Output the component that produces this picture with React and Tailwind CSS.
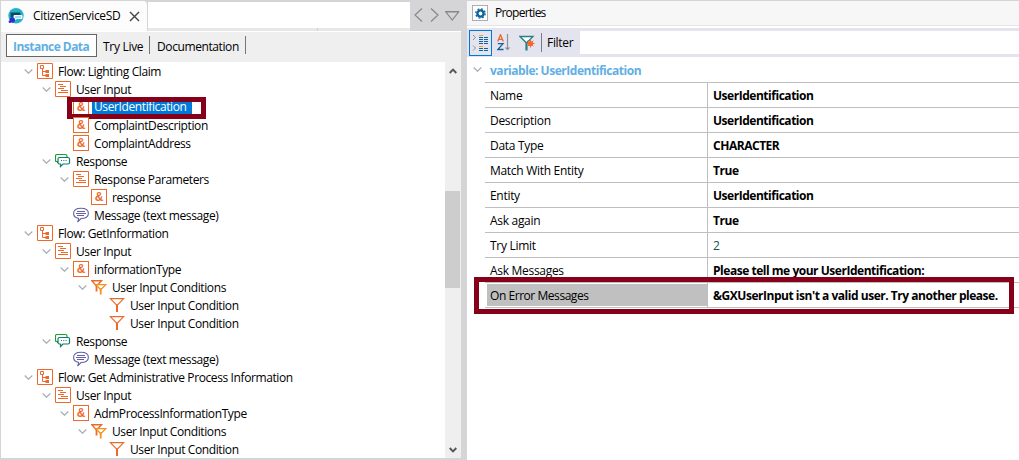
import React from "react";

const ORANGE = "#ec6a2c";

function Chevron() {
  return (
    <svg className="h-[5px] w-[9px]" viewBox="0 0 9 5" fill="none">
      <path d="M0.7 0.5 L4.5 4.2 L8.3 0.5" stroke="#a9b0b4" strokeWidth="1.3" />
    </svg>
  );
}

function FlowIcon() {
  return (
    <svg className="size-4" viewBox="0 0 16 16" fill="none" stroke={ORANGE}>
      <path d="M0.5 0.5h15v15h-15z" fill="#fff" />
      <path d="M3.5 2.5h3v3h-3zM5.5 5.5v7H9M5.5 8.5H9" />
      <path d="M8.500 7h3.500v3H8.500zM8.500 11h3.500v3H8.500z" fill={ORANGE} stroke="none" />
    </svg>
  );
}

function InputIcon() {
  return (
    <svg className="size-4" viewBox="0 0 16 16" fill="none" stroke={ORANGE}>
      <path d="M0.5 0.5h15v15h-15z" fill="#fff" />
      <path d="M3 3.5h5M5 5.5h6M3 7.5h6M6 9.5h7M3 11.5h10" />
    </svg>
  );
}

function VarIcon() {
  return (
    <span className="flex size-4 items-center justify-center border border-[#ec6a2c] bg-white font-['Liberation_Sans'] text-[12px] leading-none font-bold tracking-normal text-[#ec6a2c]">
      &amp;
    </span>
  );
}

function ResponseIcon() {
  return (
    <svg className="size-4" viewBox="0 0 16 16" fill="none">
      <path d="M2.5 10V8.5H1.5Q0.5 8.5 0.5 7.500V3Q0.500 1.500 2 1.500H10.500Q12 1.500 12 3V4" stroke="#19a02c" strokeWidth="1.200" />
      <path d="M4.500 4.500H13Q14.500 4.500 14.500 6V9.500Q14.500 11 13 11H8L5.500 13.500V11H4.500Q3 11 3 9.500V6Q3 4.500 4.500 4.500Z" fill="#fff" stroke="#157a6e" strokeWidth="1.200" />
      <path d="M6 7h1v1H6zM8.300 7h1v1h-1zM10.600 7h1v1h-1z" fill="#157a6e" />
    </svg>
  );
}

function MessageIcon() {
  return (
    <svg className="size-4" viewBox="0 0 16 16" fill="none" stroke="#6460a5">
      <path d="M5.500 11.300C2.500 10.800 0.600 9 0.600 6.500C0.600 3.300 3.500 1.300 8 1.300S15.400 3.300 15.400 6.500S12.500 11.500 8 11.500L4.500 15Q5.800 13 5.500 11.300Z" strokeWidth="1.100" />
      <path d="M4 4.500h8M3 6.500h10M4 8.500h7" />
    </svg>
  );
}

function FunnelIcon() {
  return (
    <svg className="size-4" viewBox="0 0 16 16" fill="none">
      <path d="M1.300 1.600H14.700L8.500 8H7.500Z" stroke={ORANGE} strokeWidth="1.200" />
      <path d="M8 7.500V15" stroke={ORANGE} strokeWidth="2" />
    </svg>
  );
}

function FunnelsIcon() {
  return (
    <svg className="size-4" viewBox="0 0 16 16" fill="none">
      <path d="M0.800 1.700H10.500L6 6.500H5Z" stroke={ORANGE} strokeWidth="1.400" />
      <path d="M5.500 6V12.500" stroke={ORANGE} strokeWidth="1.800" />
      <path d="M5 5.700H14.700L10 10.500H9.500Z" fill="#fff" stroke="#f0941f" strokeWidth="1.300" />
      <path d="M9.700 9.500V15.500" stroke="#f0941f" strokeWidth="1.800" />
    </svg>
  );
}

const ICONS = {
  flow: FlowIcon,
  input: InputIcon,
  variable: VarIcon,
  response: ResponseIcon,
  message: MessageIcon,
  funnel: FunnelIcon,
  funnels: FunnelsIcon,
};

const INDENTS = ["pl-[22px]", "pl-[40px]", "pl-[58px]", "pl-[76px]", "pl-[94px]"];

const TREE = [
  { level: 0, icon: "flow", label: "Flow: Lighting Claim", open: true },
  { level: 1, icon: "input", label: "User Input", open: true },
  { level: 2, icon: "variable", label: "UserIdentification", selected: true },
  { level: 2, icon: "variable", label: "ComplaintDescription" },
  { level: 2, icon: "variable", label: "ComplaintAddress" },
  { level: 1, icon: "response", label: "Response", open: true },
  { level: 2, icon: "input", label: "Response Parameters", open: true },
  { level: 3, icon: "variable", label: "response" },
  { level: 2, icon: "message", label: "Message (text message)" },
  { level: 0, icon: "flow", label: "Flow: GetInformation", open: true },
  { level: 1, icon: "input", label: "User Input", open: true },
  { level: 2, icon: "variable", label: "informationType", open: true },
  { level: 3, icon: "funnels", label: "User Input Conditions", open: true },
  { level: 4, icon: "funnel", label: "User Input Condition" },
  { level: 4, icon: "funnel", label: "User Input Condition" },
  { level: 1, icon: "response", label: "Response", open: true },
  { level: 2, icon: "message", label: "Message (text message)" },
  { level: 0, icon: "flow", label: "Flow: Get Administrative Process Information", open: true },
  { level: 1, icon: "input", label: "User Input", open: true },
  { level: 2, icon: "variable", label: "AdmProcessInformationType", open: true },
  { level: 3, icon: "funnels", label: "User Input Conditions", open: true },
  { level: 4, icon: "funnel", label: "User Input Condition" },
];

function TreeRow({ level, icon, label, open, selected }) {
  const Icon = ICONS[icon];
  return (
    <div className={`relative flex h-[18px] items-center ${INDENTS[level]}`}>
      <span className="flex w-[14px] shrink-0 items-center pl-px">{open && <Chevron />}</span>
      <span className="shrink-0"><Icon /></span>
      <span
        className={
          selected
            ? "ml-[3px] h-[18px] w-[100px] bg-[#0078d7] pl-[2px] leading-[18px] whitespace-nowrap text-white"
            : "ml-[5px] leading-[17px] whitespace-nowrap"
        }
      >
        {label}
      </span>
      {selected && (
        <span className="absolute -top-px left-[66px] h-[22px] w-[139px] border-5 border-[#850018]" />
      )}
    </div>
  );
}

function AppLogo() {
  return (
    <svg className="size-4" viewBox="0 0 16 16">
      <circle cx="8" cy="7.700" r="7.700" fill="#27b0cc" />
      <path d="M2.500 4.500h9q1 0 1 1v2H7v2H3.500q-1 0-1-1z" fill="#0c4a5e" />
      <path d="M6.500 7h7q1 0 1 1v2q0 1-1 1H9l-2.500 1.500V11h-1V8q0-1 1-1z" fill="#eefcff" />
      <path d="M7 9h6" stroke="#27b0cc" strokeWidth="0.800" />
      <circle cx="4.300" cy="12" r="2.700" fill="#2d2fd0" />
      <circle cx="1.900" cy="13.700" r="1.300" fill="#2d2fd0" />
    </svg>
  );
}

function TabBar() {
  return (
    <div className="flex h-[30px] bg-[#d5d5d7]">
      <div className="flex w-[146px] items-center rounded-tr-sm bg-[#fcfcfc] pl-[7px]">
        <AppLogo />
        <span className="ml-[9px] w-[88px] tracking-[-0.33px] whitespace-nowrap">CitizenServiceSD</span>
        <svg className="ml-[8px] size-[11px]" viewBox="0 0 11 11" stroke="#444" strokeWidth="1.400">
          <path d="M1 1l9 9M10 1l-9 9" />
        </svg>
      </div>
      <div className="flex w-[263px] flex-col border-l border-[#d5d5d7] pt-px">
        <div className="h-[26px] bg-white" />
        <div className="flex flex-1 bg-[#e7e7e7] pl-[169px]">
          <div className="w-px bg-[#cfcfd1]" />
        </div>
      </div>
      <svg className="mt-[7px] ml-[3px] h-[15px] w-[48px]" viewBox="0 0 48 15" fill="none" stroke="#85888b" strokeWidth="1.200">
        <path d="M9 0.500L2 7L9 13.500M18 0.500L25 7L18 13.500M32 3.500H46M33 4H45.500L39.200 12Z" />
      </svg>
    </div>
  );
}

function ViewBar() {
  return (
    <div className="flex h-[31px] border-t border-white bg-[#efefef] pt-[2px] pl-[5px]">
      <div className="h-[23px] w-[91px] border border-[#666] bg-white pl-[6px] leading-[24px] font-bold tracking-[-0.53px] whitespace-nowrap text-[#61afe4]">
        Instance Data
      </div>
      <div className="mt-[2px] ml-[6px] h-[18px] w-[47px] border-r border-[#777] leading-[21px] tracking-[-0.3px] whitespace-nowrap">Try Live</div>
      <div className="mt-[2px] ml-[7px] h-[18px] w-[89px] border-r border-[#777] leading-[21px] tracking-[-0.4px] whitespace-nowrap">Documentation</div>
    </div>
  );
}

function ScrollBar() {
  return (
    <div className="flex w-4 flex-col items-center bg-[#efefef]">
      <svg className="mt-[6px] h-[6px] w-[8px]" viewBox="0 0 8 6" fill="none" stroke="#555" strokeWidth="1.900">
        <path d="M0.700 5L4 1.700L7.300 5" />
      </svg>
      <div className="mt-[117px] mr-px h-[97px] w-[15px] bg-[#cdcdcd]" />
      <svg className="mt-auto mb-[5px] h-[6px] w-[8px]" viewBox="0 0 8 6" fill="none" stroke="#555" strokeWidth="1.900">
        <path d="M0.700 1L4 4.300L7.300 1" />
      </svg>
    </div>
  );
}

function Gear() {
  return (
    <span className="flex size-4 items-center justify-center border border-[#a7b0b7] bg-white">
      <svg className="size-[11px]" viewBox="0 0 11 11" fill="none" stroke="#0b639c">
        <circle cx="5.500" cy="5.500" r="3.100" strokeWidth="2.400" />
        <circle cx="5.500" cy="5.500" r="4.700" strokeWidth="1.300" strokeDasharray="1.850 1.840" />
      </svg>
    </span>
  );
}

function CategoryIcon() {
  return (
    <svg className="h-[18px] w-[19px]" viewBox="0 0 19 18" fill="none">
      <path d="M2 1L4.500 3.500L2 6M2 11.500L4.500 14L2 16.500" stroke="#8c9196" />
      <path d="M8 1.500h4M8 12.500h4" stroke="#f29a3c" />
      <path d="M8 3.500h4M13 3.500h4M8 5.500h4M13 5.500h4M8 7.500h4M13 7.500h4M8 9.500h4M13 9.500h4M8 14.500h4M13 14.500h4M8 16.500h4M13 16.500h4" stroke="#12639a" />
    </svg>
  );
}

function SortIcon() {
  return (
    <svg className="h-[17px] w-[13px]" viewBox="0 0 13 17" fill="none">
      <path d="M0.700 7.500L3.500 0.700L6.300 7.500M1.500 5.300H5.500" stroke="#f1662d" strokeWidth="1.300" />
      <path d="M0.800 9.600H6L0.800 15.500H6.500" stroke="#12639a" strokeWidth="1.300" />
      <path d="M10.500 0V15M8.500 13.500L10.500 15.500L12.500 13.500" stroke="#8b8f93" strokeWidth="1.200" />
    </svg>
  );
}

function FilterIcon() {
  return (
    <svg className="size-4" viewBox="0 0 16 16" fill="none">
      <path d="M1 1.500H14L8 7.500H7Z" fill="#fff" stroke="#267f88" strokeWidth="1.300" />
      <path d="M7.500 7V15.500" stroke="#267f88" strokeWidth="2.200" />
      <circle cx="11.500" cy="8.500" r="2.600" fill="#fb6528" />
      <path d="M11.500 4.500v8M7.500 8.500h8M8.700 5.700l5.600 5.600M14.300 5.700l-5.600 5.600" stroke="#fb6528" />
    </svg>
  );
}

const PROPERTIES = [
  { name: "Name", value: "UserIdentification" },
  { name: "Description", value: "UserIdentification" },
  { name: "Data Type", value: "CHARACTER" },
  { name: "Match With Entity", value: "True" },
  { name: "Entity", value: "UserIdentification" },
  { name: "Ask again", value: "True" },
  { name: "Try Limit", value: "2", plain: true },
  { name: "Ask Messages", value: "Please tell me your UserIdentification:" },
  { name: "On Error Messages", value: "&GXUserInput isn't a valid user. Try another please.", selected: true },
];

function PropertyRow({ name, value, plain, selected }) {
  return (
    <div className="relative flex h-[25px] border-t border-[#bfbfbf]">
      <div className={`w-[223px] border-r border-[#bfbfbf] leading-[26px] tracking-[-0.3px] ${selected ? "py-px pl-[2px]" : "pl-[5px]"}`}>
        {selected ? <div className="h-[22px] bg-[#c0c0c0] pl-[3px] leading-[24px] tracking-[-0.45px]">{name}</div> : name}
      </div>
      <div className={`pl-[5px] leading-[26px] whitespace-nowrap ${plain ? "text-[#164f4a]" : "font-bold tracking-[-0.47px]"}`}>{value}</div>
      {selected && <div className="absolute -top-[6px] -left-[11px] h-[37px] w-[540px] border-5 border-[#850018]" />}
    </div>
  );
}

export default function App() {
  return (
    <div className="flex h-[460px] w-[1019px] overflow-hidden bg-[#d5d5d7] pt-px font-['Open_Sans','Noto_Sans',sans-serif] text-[12px] tracking-[-0.39px] text-black">
      <section className="ml-px flex w-[460px] flex-col">
        <TabBar />
        <ViewBar />
        <div className="flex h-[396px] bg-white">
          <div className="w-[444px]">
            {TREE.map((row, i) => <TreeRow key={i} {...row} />)}
          </div>
          <ScrollBar />
        </div>
      </section>
      <section className="ml-[6px] flex w-[552px] flex-col bg-white">
        <header className="flex h-[25px] items-center border-b border-[#e5e5e5] bg-[#f7f7f7] pl-[5px]">
          <Gear />
          <span className="ml-[7px] tracking-[-0.75px]">Properties</span>
        </header>
        <div className="mt-[2px] flex h-[29px] shrink-0 items-center bg-[#e4e4ef] pl-[2px]">
          <div className="flex h-[26px] w-[23px] items-center justify-center border border-[#0078d7]"><CategoryIcon /></div>
          <span className="ml-[5px]"><SortIcon /></span>
          <span className="ml-[9px]"><FilterIcon /></span>
          <div className="ml-[6px] h-[19px] w-px bg-[#777b8c]" />
          <span className="ml-[5px] w-[33px] tracking-[-0.3px]">Filter</span>
          <div className="h-[23px] flex-1 bg-white" />
        </div>
        <div className="flex h-[25px] shrink-0 items-center pl-[6px]">
          <Chevron />
          <span className="ml-[8px] pt-[3px] font-bold tracking-[-0.47px] text-[#61afe4]">variable: UserIdentification</span>
        </div>
        <div className="ml-[18px] border-b border-[#bfbfbf]">
          {PROPERTIES.map((p) => <PropertyRow key={p.name} {...p} />)}
        </div>
      </section>
    </div>
  );
}
